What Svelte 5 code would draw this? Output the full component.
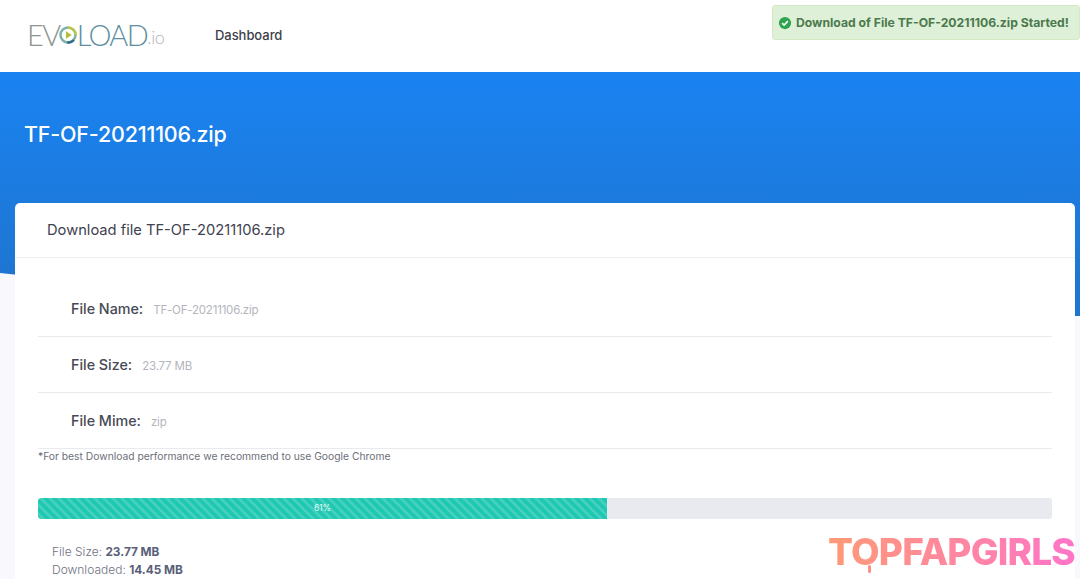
<script>
  const rows = [
    { label: 'File Name:', value: 'TF-OF-20211106.zip' },
    { label: 'File Size:', value: '23.77 MB' },
    { label: 'File Mime:', value: 'zip' }
  ];
</script>

<div class="page">
  <nav class="nav">
    <div class="logo">
      <span class="evo">EV</span>
      <svg class="play" viewBox="0 0 24 24" width="20" height="24" aria-hidden="true">
        <circle cx="12" cy="12" r="9" fill="none" stroke="#7fb0a8" stroke-width="3"/>
        <path d="M12 3a9 9 0 0 1 9 9" fill="none" stroke="#b9c84a" stroke-width="3"/>
        <path d="M19 18a9 9 0 0 1-8 3" fill="none" stroke="#2f6f8f" stroke-width="3"/>
        <path d="M9.500 7.500 16.500 12 9.500 16.500z" fill="#b4bd3c"/>
      </svg>
      <span class="load">LOAD</span><span class="io">.io</span>
    </div>
    <a class="dash" href="#dashboard">Dashboard</a>
    <div class="toast">
      <svg viewBox="0 0 16 16" width="14" height="14" aria-hidden="true">
        <circle cx="8" cy="8" r="7" fill="#2ea44f"/>
        <path d="M4.700 8.200 7 10.400 11.300 5.900" fill="none" stroke="#fff" stroke-width="1.800"/>
      </svg>
      <span>Download of File TF-OF-20211106.zip Started!</span>
    </div>
  </nav>

  <header class="hero">
    <h1>TF-OF-20211106.zip</h1>
    <svg class="wave" viewBox="0 0 1080 43" preserveAspectRatio="none" aria-hidden="true">
      <path d="M0 0H1080V43C800 43 300 30 0 0Z" fill="#1e76d2"/>
    </svg>
  </header>

  <main class="card">
    <div class="card-head">Download file TF-OF-20211106.zip</div>
    <div class="card-body">
      {#each rows as row}
        <div class="row">
          <span class="label">{row.label}</span>
          <span class="value">{row.value}</span>
        </div>
      {/each}
      <p class="note">*For best Download performance we recommend to use Google Chrome</p>
      <div class="progress">
        <div class="bar" style="width: 56.1%">61%</div>
      </div>
      <div class="stats">
        <div>File Size: <b>23.77 MB</b></div>
        <div>Downloaded: <b>14.45 MB</b></div>
      </div>
    </div>
  </main>

  <div class="mark">
    <span>TOPFAPGIRLS</span>
    <i class="drip"></i>
  </div>
</div>

<style>
  :global(body) {
    margin: 0;
    background: #f8f8fd;
    overflow: hidden;
  }
  .page {
    position: relative;
    height: 579px;
    overflow: hidden;
    font-family: Inter, "Liberation Sans", sans-serif;
    color: #3f4250;
  }
  .nav {
    height: 72px;
    background: #fff;
    display: flex;
    align-items: center;
    padding-left: 27px;
    box-sizing: border-box;
    position: relative;
  }
  .logo {
    display: flex;
    align-items: center;
    width: 188px;
    height: 26px;
    font-family: Lato, sans-serif;
    font-size: 29px;
    font-weight: 300;
    line-height: 26px;
    letter-spacing: -1.6px;
    margin-top: -3px;
  }
  .evo { color: #8f9391; }
  .play { margin: 0 0 0 -2px; flex: none; }
  .load { color: #5d8fa0; margin-left: -1px; }
  .io { color: #b1b4b5; font-size: 18px; align-self: flex-end; line-height: 22px; letter-spacing: -0.3px; }
  .dash {
    color: #3c3f4b;
    font-size: 13px;
    font-weight: 500;
    letter-spacing: -0.05px;
    text-decoration: none;
    margin-top: -3px;
  }
  .toast {
    position: absolute;
    top: 5px;
    left: 772px;
    right: 0;
    height: 35px;
    box-sizing: border-box;
    background: #dff0d8;
    border: 1px solid #d6e9c6;
    border-radius: 3px;
    display: flex;
    align-items: center;
    gap: 4px;
    padding-left: 5px;
    color: #4b7a4d;
    font-size: 12.200px;
    font-weight: 700;
    white-space: nowrap;
  }
  .hero {
    height: 201px;
    background: linear-gradient(#1a83f2, #1e76d2);
    position: relative;
    box-sizing: border-box;
    padding: 47px 0 0 24px;
  }
  .hero h1 {
    margin: 0;
    color: #fff;
    font-size: 21.500px;
    font-weight: 500;
    line-height: 30px;
    letter-spacing: -0.2px;
  }
  .wave {
    position: absolute;
    left: 0;
    top: 100%;
    width: 100%;
    height: 43px;
    display: block;
  }
  .card {
    position: absolute;
    top: 203px;
    left: 15px;
    width: 1060px;
    height: 376px;
    background: #fff;
    border-radius: 5px 5px 0 0;
    box-sizing: border-box;
  }
  .card-head {
    height: 55px;
    box-sizing: border-box;
    border-bottom: 1px solid #eceef2;
    padding-left: 32px;
    display: flex;
    align-items: center;
    font-size: 14.700px;
    font-weight: 400;
    color: #3f4250;
  }
  .card-body { padding: 23px 23px 0; }
  .row {
    height: 56px;
    box-sizing: border-box;
    border-bottom: 1px solid #e9eaee;
    padding: 19px 0 0 33px;
    display: flex;
    align-items: baseline;
    gap: 10px;
  }
  .label { font-size: 14.300px; font-weight: 500; color: #474a56; }
  .value { font-size: 11.500px; color: #b3b5bd; letter-spacing: -0.2px; }
  .note {
    margin: 0;
    font-size: 10.300px;
    line-height: 14px;
    color: #6d7079;
  }
  .progress {
    height: 21px;
    margin-top: 35px;
    background: #e9eaef;
    border-radius: 3px;
    overflow: hidden;
  }
  .bar {
    height: 100%;
    background-color: #1fc8b2;
    background-image: linear-gradient(45deg, rgba(255,255,255,.16) 25%, transparent 25%, transparent 50%, rgba(255,255,255,.16) 50%, rgba(255,255,255,.16) 75%, transparent 75%);
    background-size: 9px 9px;
    border-radius: 3px 0 0 3px;
    color: #e8fbf8;
    font-size: 8.500px;
    line-height: 21px;
    text-align: center;
  }
  .stats {
    padding: 24px 0 0 14px;
    font-size: 12px;
    line-height: 18px;
    font-weight: 300;
    color: #6f7280;
  }
  .stats b { color: #5a6078; font-weight: 700; font-size: 11.800px; }
  .mark {
    position: absolute;
    left: 828px;
    top: 534px;
    font-family: Inter, sans-serif;
    font-size: 37px;
    font-weight: 800;
    line-height: 36px;
    letter-spacing: -0.800px;
    white-space: nowrap;
  }
  .mark span {
    background: linear-gradient(90deg, #ff9a76, #ff75c8);
    -webkit-background-clip: text;
    background-clip: text;
    color: transparent;
  }
  .drip {
    position: absolute;
    left: 40px;
    top: 31px;
    width: 3px;
    height: 8px;
    border-radius: 2px;
    background: #ff8f84;
  }
</style>
